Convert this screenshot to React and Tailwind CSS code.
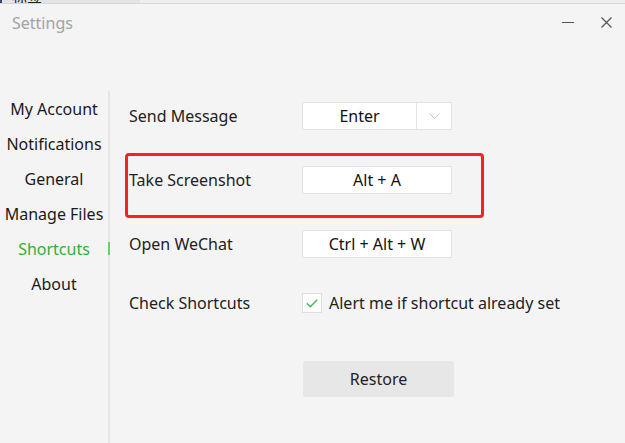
import React from 'react';

const font = { fontFamily: '"Noto Sans", "Noto Sans CJK SC", sans-serif' };

const navItems = ['My Account', 'Notifications', 'General', 'Manage Files', 'Shortcuts', 'About'];

// Input showing a key combination
const KeyBox = ({ children, withArrow }) => (
  <div className="flex h-[28px] w-[150px] bg-white border border-[#e3e3e3]">
    <div className="flex-1 flex items-center justify-center text-[16px] text-[#111]">{children}</div>
    {withArrow && (
      <div className="w-[35px] border-l border-[#e3e3e3] flex items-center justify-center">
        <svg width="11" height="6" viewBox="0 0 11 6" fill="none">
          <path d="M0.5 0.5 L5.5 5.5 L10.5 0.5" stroke="#c4c4c4" strokeWidth="1" />
        </svg>
      </div>
    )}
  </div>
);

const Row = ({ label, children, className }) => (
  <div className={`flex items-center h-[28px] ${className || ''}`}>
    <div className="w-[173px] text-[16px] text-[#222]">{label}</div>
    {children}
  </div>
);

export default function App() {
  return (
    <div className="w-[625px] h-[443px] overflow-hidden bg-[#f4f4f4] flex flex-col" style={font}>
      {/* strip of the window behind */}
      <div className="h-[4px] flex border-b border-[#d6d6d6] overflow-hidden shrink-0">
        <div className="w-[140px] bg-[#e4e4e4] flex items-start border-l-2 border-[#2b4a7a]">
          <span className="ml-[10px] -mt-[11px] text-[15px] text-[#222] leading-none">标签</span>
          <span className="ml-[20px] -mt-[11px] text-[13px] text-[#aaa] leading-none">9:15</span>
        </div>
        <div className="flex-1 bg-[#eeeeee]" />
      </div>

      {/* title bar */}
      <div className="h-[37px] flex items-center shrink-0">
        <span className="ml-[12px] text-[16px] text-[#a3a3a3]">Settings</span>
        <div className="ml-auto flex items-center">
          <div className="w-[12px] h-[1px] bg-[#555] mr-[27px]" />
          <svg width="11" height="11" viewBox="0 0 11 11" className="mr-[13px]">
            <path d="M0.5 0.5 L10.5 10.5 M10.5 0.5 L0.5 10.5" stroke="#555" strokeWidth="1.2" />
          </svg>
        </div>
      </div>

      <div className="flex flex-1 mt-[50px]">
        {/* sidebar */}
        <div className="w-[110px] border-r-2 border-[#e6e6e6] relative">
          {navItems.map((item) => (
            <div
              key={item}
              className={`h-[35px] flex items-center justify-center text-[16px] ${
                item === 'Shortcuts' ? 'text-[#2fb03a]' : 'text-[#1a1a1a]'
              }`}
            >
              {item}
            </div>
          ))}
          <div className="absolute right-[-2px] top-[151px] w-[2px] h-[13px] bg-[#5cd66a]" />
        </div>

        {/* content */}
        <div className="flex-1 relative pl-[19px] pt-[11px]">
          <Row label="Send Message">
            <KeyBox withArrow>Enter</KeyBox>
          </Row>
          <Row label="Take Screenshot" className="mt-[36px]">
            <KeyBox>Alt + A</KeyBox>
          </Row>
          <Row label="Open WeChat" className="mt-[36px]">
            <KeyBox>Ctrl + Alt + W</KeyBox>
          </Row>
          <Row label="Check Shortcuts" className="mt-[31px]">
            <div className="flex items-center">
              <div className="w-[20px] h-[20px] bg-white border border-[#dedede] flex items-center justify-center">
                <svg width="12" height="9" viewBox="0 0 12 9" fill="none">
                  <path d="M0.8 4.2 L4.3 7.8 L11.2 0.8" stroke="#3cb44b" strokeWidth="1.3" />
                </svg>
              </div>
              <span className="ml-[7px] text-[16px] text-[#222]">Alert me if shortcut already set</span>
            </div>
          </Row>
          <div className="mt-[44px] ml-[174px] w-[151px] h-[36px] rounded-[3px] bg-[#e7e7e7] flex items-center justify-center text-[16px] text-[#222]">
            Restore
          </div>

          {/* red highlight */}
          <div className="absolute left-[15px] top-[62px] w-[359px] h-[65px] border-[3px] border-[#f52222] rounded-[4px]" />
        </div>
      </div>
    </div>
  );
}
